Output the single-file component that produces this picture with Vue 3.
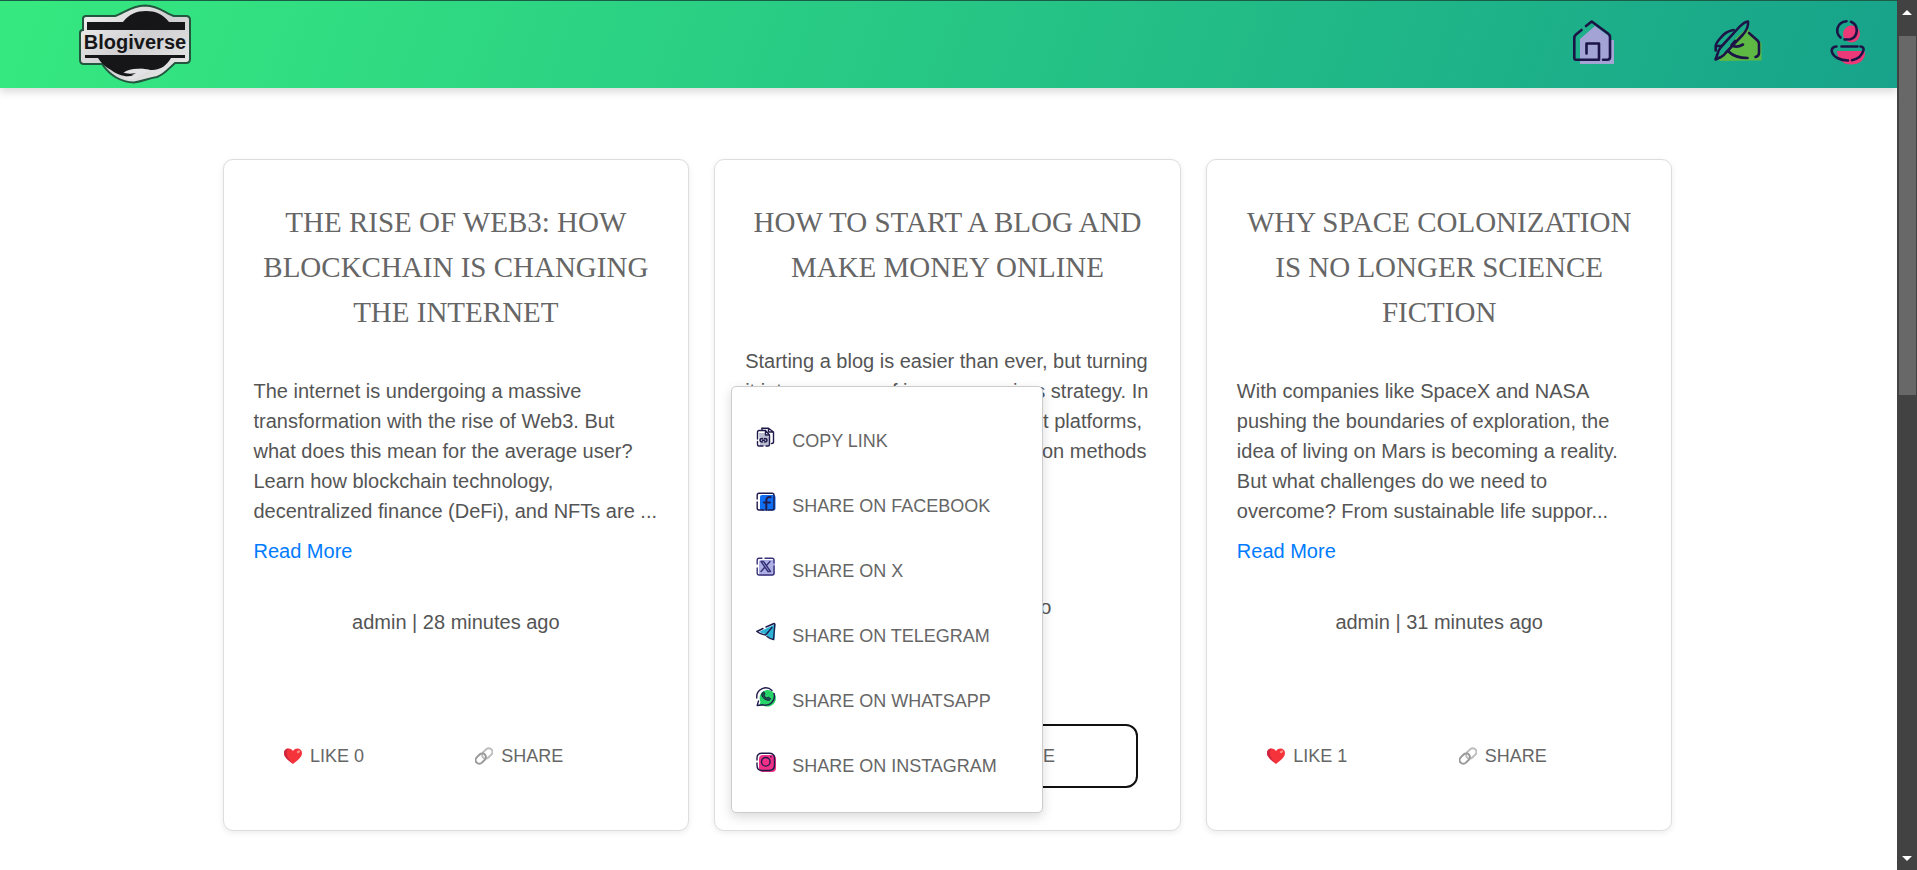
<script setup>
import { ref } from 'vue'

const posts = ref([
  {
    id: 1,
    title: 'The Rise of Web3: How Blockchain Is Changing the Internet',
    excerpt:
      'The internet is undergoing a massive transformation with the rise of Web3. But what does this mean for the average user? Learn how blockchain technology, decentralized finance (DeFi), and NFTs are ...',
    author: 'admin',
    age: '28 minutes ago',
    likes: 0,
  },
  {
    id: 2,
    title: 'How to Start a Blog and Make Money Online',
    excerpt:
      'Starting a blog is easier than ever, but turning it into a source of income requires strategy. In this guide, we will explore the best platforms, content tips, SEO, and monetization methods to help you succeed ...',
    author: 'admin',
    age: '30 minutes ago',
    likes: 0,
  },
  {
    id: 3,
    title: 'Why Space Colonization Is No Longer Science Fiction',
    excerpt:
      'With companies like SpaceX and NASA pushing the boundaries of exploration, the idea of living on Mars is becoming a reality. But what challenges do we need to overcome? From sustainable life suppor...',
    author: 'admin',
    age: '31 minutes ago',
    likes: 1,
  },
])

const openMenu = ref(2)

const shareTargets = [
  { key: 'copy', label: 'Copy Link' },
  { key: 'facebook', label: 'Share on Facebook' },
  { key: 'x', label: 'Share on X' },
  { key: 'telegram', label: 'Share on Telegram' },
  { key: 'whatsapp', label: 'Share on WhatsApp' },
  { key: 'instagram', label: 'Share on Instagram' },
]

function toggle(id) {
  openMenu.value = openMenu.value === id ? null : id
}
</script>

<template>
  <div class="window">
    <div class="page">
      <header class="topbar">
        <a href="#" class="brand" aria-label="Blogiverse">
          <svg width="114" height="80" viewBox="0 0 114 80">
            <defs>
              <linearGradient id="plate" x1="0" y1="0" x2="1" y2="1">
                <stop offset="0" stop-color="#f4f4f4" />
                <stop offset="0.5" stop-color="#cfcfd1" />
                <stop offset="1" stop-color="#ededed" />
              </linearGradient>
            </defs>
            <path
              d="M8 12H37C45 10 52 2 67 1.500C82 2 88 10 96 12H108Q112 12 112 16V55Q112 59 108 59H97C91 64 87 70 79 73C71 74 66 77 56 78.500C40 78 31 70 24 60H6Q2 60 2 56V29Q2 26 5 26V15Q5 12 8 12Z"
              fill="url(#plate)" stroke="#22563f" stroke-width="2" />
            <path d="M9 18H45C51 10 59 7 68 7S85 10 91 18H107V26H9Z" fill="#161618" />
            <path d="M7 51H107V54H93C89 61 83 66 74 66C68 66 67 64 61 65C54 66 49 68 46 70L53 71Q58 71 58 69C54 75 40 72 33 66C27 63 23 59 20 54H7Z" fill="#161618" />
            <path d="M45 69C52 64 60 64 72 66C64 70 62 73 56 75C53 76 47 75 44 73Q52 74 57 70Q51 69 45 69Z" fill="#e3e3e5" />
            <path d="M44 68Q50 71 58 69Q54 72 47 71Z" fill="#161618" />
            <text x="57" y="45" text-anchor="middle" class="brand-text">Blogiverse</text>
          </svg>
        </a>
        <nav class="nav" aria-label="Main">
          <a href="#" class="home" aria-label="Home">
            <svg width="50" height="50" viewBox="0 0 50 50">
              <path d="M12 47V22L27 9L42 20V23H46V47Z" fill="#a3a3d6" />
              <g class="ink">
                <path d="M13.500 13L8 17.500Q6.300 19 6.300 21V41Q6.300 42.700 8 42.700H31V26.500H18.500V36.500" />
                <path d="M18 9L23.700 4.500L40 16.500Q42 18 42 20V40Q42 42.700 39.500 42.700H35" />
              </g>
            </svg>
          </a>
          <a href="#" aria-label="Write">
            <svg width="50" height="50" viewBox="0 0 50 50">
              <path d="M34 11L37 15L48.500 26V43.500H40L7 44L4 41L12 35L24 20Z" fill="#5db944" />
              <g class="ink">
                <path d="M35 4.500C32 4.500 28 8 24 12.500L8 30Q5.500 33 4.500 37L2.500 42.500L8 40Q10.500 39 13 35.500L30 17.500C34 13 35.500 9 35 4.500Z" />
                <path d="M20.500 13C14 14 11 17 7 21.500Q3 26 2.700 29V33.500M3 29H8" />
                <path d="M36 16L44.500 23.500Q46 25 46 27V36Q46 39 42.500 40" />
                <path d="M22 24L18.500 28Q23 31.500 30 27.500" />
                <path d="M15.500 34.500C20 39 27 41 34.500 41" />
              </g>
            </svg>
          </a>
          <a href="#" aria-label="Profile">
            <svg width="50" height="50" viewBox="0 0 50 50">
              <circle cx="28.500" cy="17" r="8.500" fill="#ec3a78" />
              <path d="M14 34H40Q42 34 42 36C42 43 36 47.500 28 47.500S15 43 14 34Z" fill="#ec3a78" />
              <g class="ink">
                <path d="M28 4.800C36 8 35.500 19.500 27.500 22.300L21.500 22.500" />
                <path d="M23.500 4.200C14 5 11.500 15 17.500 20.500" />
                <path d="M18.500 29.500H34.500" />
                <path d="M13.500 29.500Q8.500 30 8.700 34C10 40 17 43.500 25 43.500" />
                <path d="M37.500 29.500Q41 30 40.500 33C39 39 35 42 29 43.200" />
              </g>
            </svg>
          </a>
        </nav>
      </header>

      <main class="posts">
        <article v-for="post in posts" :key="post.id" class="card">
          <h2>{{ post.title }}</h2>
          <div class="excerpt">
            <p>{{ post.excerpt }}</p>
            <a href="#">Read More</a>
          </div>
          <p class="meta">{{ post.author }} | {{ post.age }}</p>
          <div class="actions">
            <button type="button" @click="post.likes++">
              <svg width="18" height="18" viewBox="0 0 18 18" aria-hidden="true">
                <path d="M9 17C5 13.500 0 10.500 0 6C0 1 6.500 0 9 4C11.500 0 18 1 18 6C18 10.500 13 13.500 9 17Z" fill="#f5333a" />
                <path d="M9 17C5 13.500 0 10.500 0 6C0 3 2 1.500 4.500 1.500C1 5 3 11 9 17Z" fill="#cf2440" />
                <ellipse cx="14.500" cy="4.800" rx="1.800" ry="1.200" fill="#ff8f87" transform="rotate(-35 14.500 4.800)" />
              </svg>
              <span>Like {{ post.likes }}</span>
            </button>
            <button
              type="button"
              :class="{ focused: openMenu === post.id }"
              :aria-expanded="openMenu === post.id"
              @click="toggle(post.id)"
            >
              <svg width="18" height="18" viewBox="0 0 18 18" fill="none" stroke-width="2" aria-hidden="true">
                <rect x="6.500" y="2.800" width="11.500" height="7.400" rx="3.700" stroke="#bdbdbd" transform="rotate(-45 12.200 6.500)" />
                <rect x="0" y="7.800" width="11.500" height="7.400" rx="3.700" stroke="#999" transform="rotate(-45 5.800 11.500)" />
              </svg>
              <span>Share</span>
            </button>
          </div>

          <ul v-if="openMenu === post.id" class="menu">
            <li v-for="item in shareTargets" :key="item.key">
              <button type="button">
                <svg width="20" height="20" viewBox="0 0 20 20" fill="none" stroke="#211b4d" stroke-width="1.400" stroke-linecap="round" stroke-linejoin="round" aria-hidden="true">
                  <g v-if="item.key === 'copy'">
                    <path d="M3 6H9L13 10V19H4Z" fill="#b9bcd0" stroke="none" />
                    <path d="M6 1.200H12.500L17.500 5V15Q17.500 16.500 15.500 16.500M12.500 1.500V5H17" />
                    <path d="M6 1.200V2.500M9.500 3.500H3Q1.500 3.500 1.500 5V12M1.500 14.500V17.500Q1.500 19 3 19H7M10 19H12Q13.500 19 13.500 17.500V8L9.500 3.500V8H13" />
                    <path d="M6.500 11.500Q4 11.500 4 13.200T6.500 15M8.500 11.500Q11 11.500 11 13.200T8.500 15M6.500 13.200H8.500" />
                  </g>
                  <g v-else-if="item.key === 'facebook'">
                    <rect x="4" y="3" width="15.500" height="15.500" rx="2" fill="#0f6ff2" stroke="none" />
                    <path d="M1.200 7V3Q1.200 1.200 3 1.200H16Q18 1.200 18 3V16Q18 18 16 18H12M1.200 10V16Q1.200 18 3 18H8" />
                    <path d="M10.300 18V10.500H8M14.500 5.200Q10.300 4.500 10.300 8.500V10.500H14" stroke-width="2" />
                  </g>
                  <g v-else-if="item.key === 'x'">
                    <rect x="3" y="3" width="16" height="15.500" rx="2" fill="#aeb0e4" stroke="none" />
                    <path d="M1.200 7V3Q1.200 1.200 3 1.200H6M9 1.200H16Q18 1.200 18 3V6M18 9V16Q18 18 16 18H3Q1.200 18 1.200 16V11" stroke="#38327a" />
                    <path d="M5 4.500H7.500L14.500 14.500H12ZM14 4.500L10.500 8.500M8.500 10.500L5 14.500" stroke="#38327a" />
                  </g>
                  <g v-else-if="item.key === 'telegram'">
                    <path d="M3 10L19.500 2L18.500 18.500L12 15L9 12Z" fill="#2bb3d6" stroke="none" />
                    <path d="M0.800 9.500L7 6.500M10 5L18 1.500Q19 1.500 18.800 3L17.500 17.500Q14 17 11 14.500M9.500 13Q4 12 0.800 9.500M9.500 13L16 5.500" />
                  </g>
                  <g v-else-if="item.key === 'whatsapp'">
                    <path d="M11 3A8.300 8.300 0 1 1 7 18.200L3 19L4.500 15A8.300 8.300 0 0 1 11 3Z" fill="#25d366" stroke="none" />
                    <path d="M0.800 11A9 9 0 0 1 16 3.500M18 6.500A9 9 0 0 1 7 17.800L1.200 18.500L2.500 14" />
                    <path d="M6.500 5.500Q4.500 7 6.500 10T12.500 13.500Q14.500 13 14.500 11.500L12.200 10.200L11 11.200Q8.500 10.300 8 8.200L9 7L8 5.200Z" fill="#145c48" stroke-width="1" />
                  </g>
                  <g v-else>
                    <rect x="3" y="3" width="17" height="17" rx="4" fill="#f02f86" stroke="none" />
                    <path d="M1 8V6Q1 1.200 6 1.200H13Q18.500 1.200 18.500 6V13Q18.500 18.500 13 18.500H6Q1 18.500 1 13V11" />
                    <circle cx="9.800" cy="9.800" r="4.300" />
                    <path d="M14.800 4.800H15" />
                  </g>
                </svg>
                <span>{{ item.label }}</span>
              </button>
            </li>
          </ul>
        </article>
      </main>
    </div>

    <div class="scrollbar" aria-hidden="true">
      <div class="arrow">
        <svg width="10" height="5" viewBox="0 0 10 5"><path d="M5 0L10 5H0Z" fill="#fff" /></svg>
      </div>
      <div class="track"><div class="thumb"></div></div>
      <div class="arrow down">
        <svg width="10" height="5" viewBox="0 0 10 5"><path d="M0 0H10L5 5Z" fill="#fff" /></svg>
      </div>
    </div>
  </div>
</template>

<style>
body {
  background: #fff;
}
</style>

<style scoped>
* {
  box-sizing: border-box;
}

.window {
  display: flex;
  height: 100vh;
  overflow: hidden;
  color: #555;
  font-family: "Liberation Sans", Arial, sans-serif;
  font-size: 20px;
  line-height: 30px;
}

.page {
  flex: 1;
  min-width: 0;
}

.topbar {
  display: flex;
  align-items: center;
  justify-content: space-between;
  height: 88px;
  padding: 0 24px 2px 78px;
  border-top: 1px solid #1a5c45;
  background: linear-gradient(110deg, #36e97f, #17a38b);
  background-origin: border-box;
  box-shadow: 0 4px 8px rgba(0, 0, 0, 0.15);
}

.topbar svg {
  display: block;
}

.brand-text {
  font-family: "Liberation Sans", Arial, sans-serif;
  font-size: 20px;
  font-weight: 700;
  fill: #161618;
}

.nav {
  display: flex;
  gap: 60px;
  padding-bottom: 4px;
}

.home {
  margin-right: 35px;
}

.ink {
  fill: none;
  stroke: #1c1446;
  stroke-width: 2.600;
  stroke-linecap: round;
  stroke-linejoin: round;
}

.posts {
  display: grid;
  grid-template-columns: repeat(3, 1fr);
  gap: 25px;
  width: 100%;
  max-width: 1452px;
  margin: 0 auto;
  padding: 71px 2px 0 0;
}

.card {
  position: relative;
  display: flex;
  flex-direction: column;
  justify-content: space-between;
  gap: 41px;
  padding: 30px;
  border: 1px solid #ddd;
  border-radius: 10px;
  background: #fff;
  box-shadow: 0 2px 6px rgba(0, 0, 0, 0.08);
}

h2 {
  margin: 10px 0 0;
  color: #666;
  font-family: Georgia, "Liberation Serif", serif;
  font-size: 29px;
  font-weight: 400;
  line-height: 45px;
  text-align: center;
  text-transform: uppercase;
}

.excerpt p {
  margin: 0 0 10px;
}

.excerpt a {
  display: block;
  width: max-content;
  color: #007bff;
  text-decoration: none;
}

.meta {
  margin: 0 0 48px;
  text-align: center;
}

.actions {
  display: grid;
  grid-template-columns: 141px 1fr;
  margin-bottom: 14px;
  padding-right: 14px;
}

button {
  display: flex;
  padding: 0;
  border: 0;
  background: none;
  color: #666;
  font: inherit;
  font-size: 18px;
  text-transform: uppercase;
  cursor: pointer;
}

.actions button {
  align-items: center;
  justify-content: center;
  gap: 8px;
  height: 60px;
  border-radius: 10px;
}

.actions .focused {
  outline: 2px solid #101010;
}

.menu {
  position: absolute;
  bottom: 17px;
  left: 16px;
  width: 312px;
  margin: 0;
  padding: 22px 24px 13px;
  border: 1px solid #ccc;
  border-radius: 5px;
  background: #fff;
  box-shadow: 0 4px 12px rgba(0, 0, 0, 0.15);
  list-style: none;
}

.menu button {
  align-items: baseline;
  gap: 16px;
  width: 100%;
  padding: 17px 0 18px;
  text-align: left;
}

.scrollbar {
  display: flex;
  flex-direction: column;
  width: 20px;
  background: #424242;
}

.arrow {
  display: flex;
  justify-content: center;
  height: 36px;
  padding-top: 10px;
}

.arrow.down {
  align-items: flex-end;
  padding: 0 0 9px;
}

.track {
  flex: 1;
  padding: 0 1px 0 2px;
}

.thumb {
  height: 45%;
  background: #686868;
}
</style>
